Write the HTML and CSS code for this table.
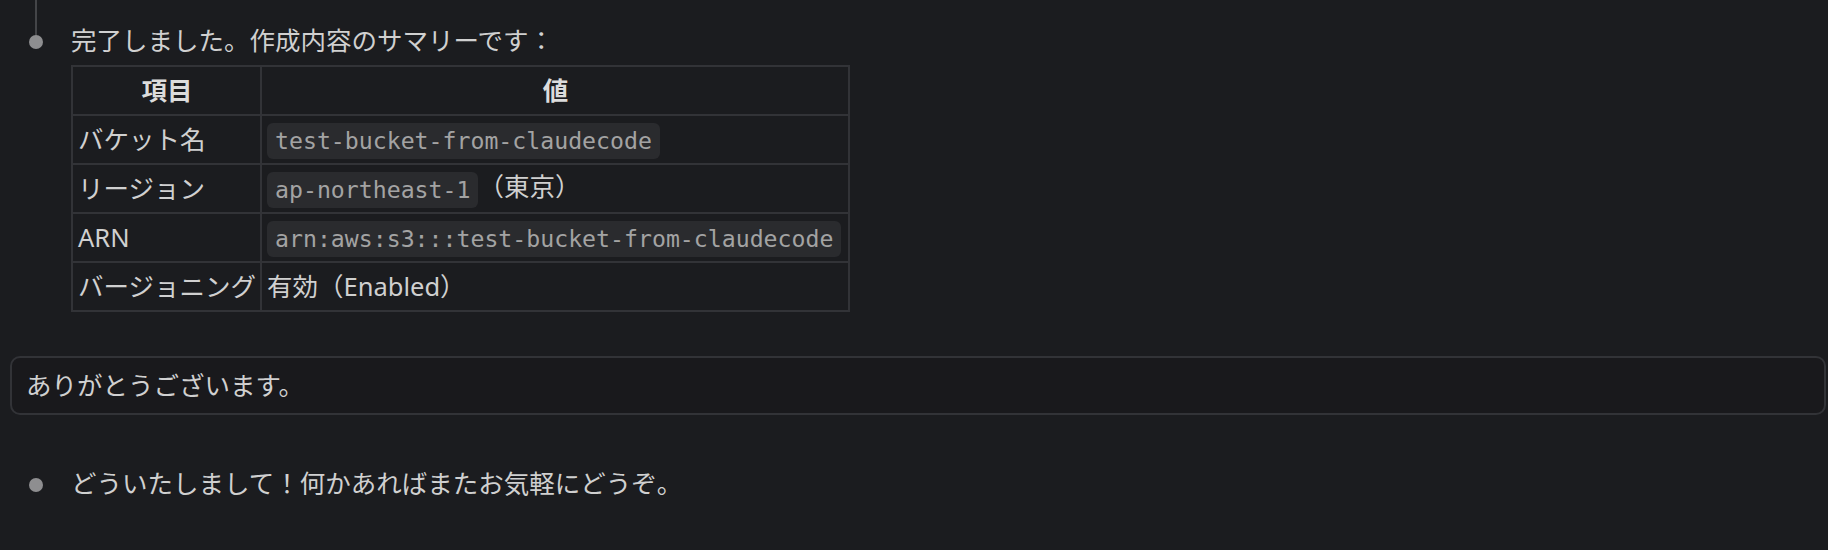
FILE: index.html
```html
<!DOCTYPE html>
<html lang="ja">
<head>
<meta charset="utf-8">
<title>Chat</title>
<link rel="stylesheet" href="styles.css">
</head>
<body>
<div class="thread">
  <div class="msg msg-first">
    <div class="gutter">
      <span class="connector"></span>
      <span class="dot"></span>
    </div>
    <div class="content">
      <p class="text">完了しました。作成内容のサマリーです：</p>
      <table class="summary">
        <colgroup>
          <col class="col-key">
          <col class="col-val">
        </colgroup>
        <thead>
          <tr><th>項目</th><th>値</th></tr>
        </thead>
        <tbody>
          <tr><td>バケット名</td><td><code class="code">test-bucket-from-claudecode</code></td></tr>
          <tr><td>リージョン</td><td><code class="code">ap-northeast-1</code>（東京）</td></tr>
          <tr><td>ARN</td><td><code class="code">arn:aws:s3:::test-bucket-from-claudecode</code></td></tr>
          <tr><td>バージョニング</td><td>有効（Enabled）</td></tr>
        </tbody>
      </table>
    </div>
  </div>

  <div class="user-box">ありがとうございます。</div>

  <div class="msg msg-second">
    <div class="gutter">
      <span class="dot"></span>
    </div>
    <div class="content">
      <p class="text">どういたしまして！何かあればまたお気軽にどうぞ。</p>
    </div>
  </div>
</div>
</body>
</html>
```

FILE: styles.css
```css
html, body {
  margin: 0;
  padding: 0;
  background: #1b1c1f;
}

body {
  color: #d0d0d0;
  font-family: "Noto Sans", "Noto Sans CJK JP", sans-serif;
  font-size: 25.5px;
  width: 1828px;
  height: 550px;
  overflow: hidden;
}

.thread {
  display: flex;
  flex-direction: column;
}

.msg {
  display: grid;
  grid-template-columns: 71px 1fr;
}

.gutter {
  display: flex;
  flex-direction: column;
  align-items: center;
}

.connector {
  width: 2px;
  height: 35px;
  background: #444548;
}

.dot {
  width: 14px;
  height: 14px;
  border-radius: 50%;
  background: #8e8e90;
}

.msg-second .dot {
  margin-top: 14px;
}

.msg-first .content {
  padding-top: 21px;
}

.text {
  margin: 0;
  line-height: 38px;
}

.summary {
  margin-top: 6px;
  border-collapse: collapse;
  table-layout: fixed;
  width: 779px;
  border: 2px solid #323337;
}

.col-key {
  width: 189px;
}

.summary th,
.summary td {
  border: 2px solid #323337;
  height: 47px;
  padding: 0 4px 0 5px;
  line-height: 35px;
  vertical-align: middle;
  white-space: nowrap;
  overflow: visible;
}

.summary th {
  font-weight: 700;
  color: #dcdcdc;
  text-align: center;
}

.summary td {
  text-align: left;
}

.code {
  display: inline-block;
  font-family: "DejaVu Sans Mono", monospace;
  font-size: 23.2px;
  line-height: 36px;
  padding: 0 8px;
  border-radius: 6px;
  background: #2a2b2e;
  color: #a3a3a3;
  vertical-align: middle;
}

.user-box {
  margin: 44px 2px 0 10px;
  border: 2px solid #323337;
  border-radius: 10px;
  background: #19191c;
  padding: 12px 14px 13px;
  line-height: 30px;
}

.msg-second {
  margin-top: 49px;
}
```
